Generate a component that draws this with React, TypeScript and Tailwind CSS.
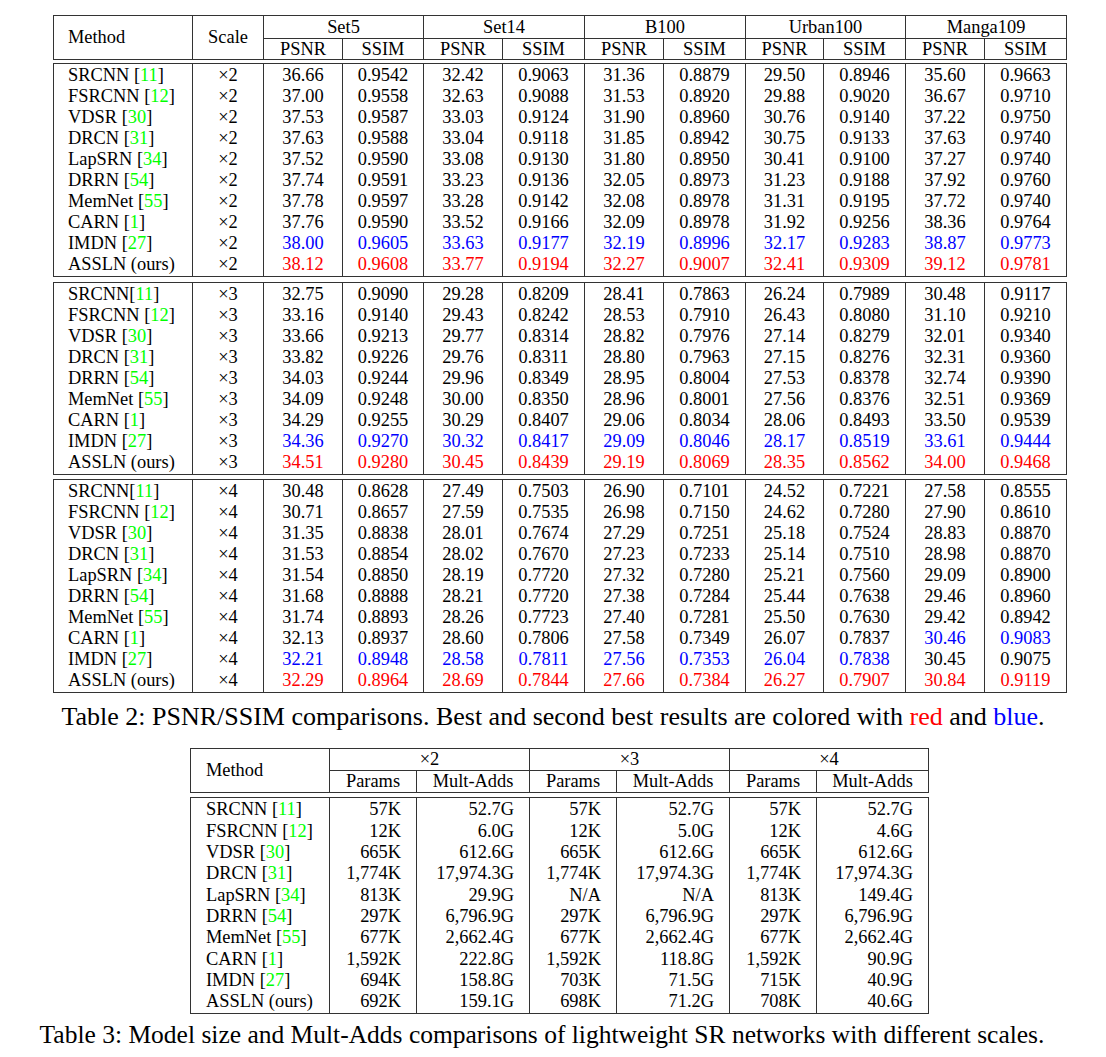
import React from "react";

type Row = {
  method: string;
  cite?: string;
  tight?: boolean;
  values: string[];
  colors?: string;
};

const TONE: Record<string, string> = {
  k: "text-black",
  b: "text-[#0000ff]",
  r: "text-[#ff0000]",
};

const x2: Row[] = [
  { method: "SRCNN", cite: "11", values: ["36.66", "0.9542", "32.42", "0.9063", "31.36", "0.8879", "29.50", "0.8946", "35.60", "0.9663"] },
  { method: "FSRCNN", cite: "12", values: ["37.00", "0.9558", "32.63", "0.9088", "31.53", "0.8920", "29.88", "0.9020", "36.67", "0.9710"] },
  { method: "VDSR", cite: "30", values: ["37.53", "0.9587", "33.03", "0.9124", "31.90", "0.8960", "30.76", "0.9140", "37.22", "0.9750"] },
  { method: "DRCN", cite: "31", values: ["37.63", "0.9588", "33.04", "0.9118", "31.85", "0.8942", "30.75", "0.9133", "37.63", "0.9740"] },
  { method: "LapSRN", cite: "34", values: ["37.52", "0.9590", "33.08", "0.9130", "31.80", "0.8950", "30.41", "0.9100", "37.27", "0.9740"] },
  { method: "DRRN", cite: "54", values: ["37.74", "0.9591", "33.23", "0.9136", "32.05", "0.8973", "31.23", "0.9188", "37.92", "0.9760"] },
  { method: "MemNet", cite: "55", values: ["37.78", "0.9597", "33.28", "0.9142", "32.08", "0.8978", "31.31", "0.9195", "37.72", "0.9740"] },
  { method: "CARN", cite: "1", values: ["37.76", "0.9590", "33.52", "0.9166", "32.09", "0.8978", "31.92", "0.9256", "38.36", "0.9764"] },
  { method: "IMDN", cite: "27", colors: "bbbbbbbbbb", values: ["38.00", "0.9605", "33.63", "0.9177", "32.19", "0.8996", "32.17", "0.9283", "38.87", "0.9773"] },
  { method: "ASSLN (ours)", colors: "rrrrrrrrrr", values: ["38.12", "0.9608", "33.77", "0.9194", "32.27", "0.9007", "32.41", "0.9309", "39.12", "0.9781"] },
];

const x3: Row[] = [
  { method: "SRCNN", cite: "11", tight: true, values: ["32.75", "0.9090", "29.28", "0.8209", "28.41", "0.7863", "26.24", "0.7989", "30.48", "0.9117"] },
  { method: "FSRCNN", cite: "12", values: ["33.16", "0.9140", "29.43", "0.8242", "28.53", "0.7910", "26.43", "0.8080", "31.10", "0.9210"] },
  { method: "VDSR", cite: "30", values: ["33.66", "0.9213", "29.77", "0.8314", "28.82", "0.7976", "27.14", "0.8279", "32.01", "0.9340"] },
  { method: "DRCN", cite: "31", values: ["33.82", "0.9226", "29.76", "0.8311", "28.80", "0.7963", "27.15", "0.8276", "32.31", "0.9360"] },
  { method: "DRRN", cite: "54", values: ["34.03", "0.9244", "29.96", "0.8349", "28.95", "0.8004", "27.53", "0.8378", "32.74", "0.9390"] },
  { method: "MemNet", cite: "55", values: ["34.09", "0.9248", "30.00", "0.8350", "28.96", "0.8001", "27.56", "0.8376", "32.51", "0.9369"] },
  { method: "CARN", cite: "1", values: ["34.29", "0.9255", "30.29", "0.8407", "29.06", "0.8034", "28.06", "0.8493", "33.50", "0.9539"] },
  { method: "IMDN", cite: "27", colors: "bbbbbbbbbb", values: ["34.36", "0.9270", "30.32", "0.8417", "29.09", "0.8046", "28.17", "0.8519", "33.61", "0.9444"] },
  { method: "ASSLN (ours)", colors: "rrrrrrrrrr", values: ["34.51", "0.9280", "30.45", "0.8439", "29.19", "0.8069", "28.35", "0.8562", "34.00", "0.9468"] },
];

const x4: Row[] = [
  { method: "SRCNN", cite: "11", tight: true, values: ["30.48", "0.8628", "27.49", "0.7503", "26.90", "0.7101", "24.52", "0.7221", "27.58", "0.8555"] },
  { method: "FSRCNN", cite: "12", values: ["30.71", "0.8657", "27.59", "0.7535", "26.98", "0.7150", "24.62", "0.7280", "27.90", "0.8610"] },
  { method: "VDSR", cite: "30", values: ["31.35", "0.8838", "28.01", "0.7674", "27.29", "0.7251", "25.18", "0.7524", "28.83", "0.8870"] },
  { method: "DRCN", cite: "31", values: ["31.53", "0.8854", "28.02", "0.7670", "27.23", "0.7233", "25.14", "0.7510", "28.98", "0.8870"] },
  { method: "LapSRN", cite: "34", values: ["31.54", "0.8850", "28.19", "0.7720", "27.32", "0.7280", "25.21", "0.7560", "29.09", "0.8900"] },
  { method: "DRRN", cite: "54", values: ["31.68", "0.8888", "28.21", "0.7720", "27.38", "0.7284", "25.44", "0.7638", "29.46", "0.8960"] },
  { method: "MemNet", cite: "55", values: ["31.74", "0.8893", "28.26", "0.7723", "27.40", "0.7281", "25.50", "0.7630", "29.42", "0.8942"] },
  { method: "CARN", cite: "1", colors: "kkkkkkkkbb", values: ["32.13", "0.8937", "28.60", "0.7806", "27.58", "0.7349", "26.07", "0.7837", "30.46", "0.9083"] },
  { method: "IMDN", cite: "27", colors: "bbbbbbbbkk", values: ["32.21", "0.8948", "28.58", "0.7811", "27.56", "0.7353", "26.04", "0.7838", "30.45", "0.9075"] },
  { method: "ASSLN (ours)", colors: "rrrrrrrrrr", values: ["32.29", "0.8964", "28.69", "0.7844", "27.66", "0.7384", "26.27", "0.7907", "30.84", "0.9119"] },
];

const sizes: Row[] = [
  { method: "SRCNN", cite: "11", values: ["57K", "52.7G", "57K", "52.7G", "57K", "52.7G"] },
  { method: "FSRCNN", cite: "12", values: ["12K", "6.0G", "12K", "5.0G", "12K", "4.6G"] },
  { method: "VDSR", cite: "30", values: ["665K", "612.6G", "665K", "612.6G", "665K", "612.6G"] },
  { method: "DRCN", cite: "31", values: ["1,774K", "17,974.3G", "1,774K", "17,974.3G", "1,774K", "17,974.3G"] },
  { method: "LapSRN", cite: "34", values: ["813K", "29.9G", "N/A", "N/A", "813K", "149.4G"] },
  { method: "DRRN", cite: "54", values: ["297K", "6,796.9G", "297K", "6,796.9G", "297K", "6,796.9G"] },
  { method: "MemNet", cite: "55", values: ["677K", "2,662.4G", "677K", "2,662.4G", "677K", "2,662.4G"] },
  { method: "CARN", cite: "1", values: ["1,592K", "222.8G", "1,592K", "118.8G", "1,592K", "90.9G"] },
  { method: "IMDN", cite: "27", values: ["694K", "158.8G", "703K", "71.5G", "715K", "40.9G"] },
  { method: "ASSLN (ours)", values: ["692K", "159.1G", "698K", "71.2G", "708K", "40.6G"] },
];

const datasets = ["Set5", "Set14", "B100", "Urban100", "Manga109"];

const Method = ({ row }: { row: Row }) => (
  <span className="whitespace-pre">
    {row.method}
    {row.cite && (
      <>
        {row.tight ? "[" : " ["}
        <span className="text-[#00ff00]">{row.cite}</span>]
      </>
    )}
  </span>
);

const ScoreBlock = ({ scale, rows }: { scale: string; rows: Row[] }) => (
  <div className="grid w-[1014px] grid-cols-[138px_71px_79px_81px_79px_82px_79px_82px_78px_82px_79px_82px] border border-[#333]">
    <div className="flex flex-col py-[1px]">
      {rows.map((r) => (
        <div key={r.method} className="flex h-[21px] items-center pl-[14px]">
          <Method row={r} />
        </div>
      ))}
    </div>
    <div className="flex flex-col border-l border-[#333] py-[1px]">
      {rows.map((r) => (
        <div key={r.method} className="flex h-[21px] items-center justify-center">
          ×{scale}
        </div>
      ))}
    </div>
    {Array.from({ length: 10 }).map((_, c) => (
      <div key={c} className="flex flex-col border-l border-[#333] py-[1px]">
        {rows.map((r) => (
          <div
            key={r.method}
            className={`flex h-[21px] items-center justify-center ${TONE[r.colors?.[c] ?? "k"]}`}
          >
            {r.values[c]}
          </div>
        ))}
      </div>
    ))}
  </div>
);

const ScoreTable = () => (
  <div className="ml-[53px] flex flex-col text-[18.4px] leading-none">
    <div className="grid w-[1014px] grid-cols-[138px_71px_79px_81px_79px_82px_79px_82px_78px_82px_79px_82px] grid-rows-[23px_20px] border border-[#333]">
      <div className="row-span-2 flex items-center pl-[14px]">Method</div>
      <div className="row-span-2 flex items-center justify-center border-l border-[#333]">
        Scale
      </div>
      {datasets.map((d) => (
        <div
          key={d}
          className="col-span-2 flex items-center justify-center border-b border-l border-[#333]"
        >
          {d}
        </div>
      ))}
      {datasets.map((d) => (
        <React.Fragment key={d}>
          <div className="flex items-center justify-center border-l border-[#333]">PSNR</div>
          <div className="flex items-center justify-center border-l border-[#333]">SSIM</div>
        </React.Fragment>
      ))}
    </div>
    <div className="mt-[3px]">
      <ScoreBlock scale="2" rows={x2} />
    </div>
    <div className="mt-[5px]">
      <ScoreBlock scale="3" rows={x3} />
    </div>
    <div className="mt-[4px]">
      <ScoreBlock scale="4" rows={x4} />
    </div>
  </div>
);

const SizeTable = () => (
  <div className="ml-[190px] flex flex-col text-[18.4px] leading-none">
    <div className="grid w-[739px] grid-cols-[138px_87px_113px_87px_113px_87px_112px] grid-rows-[22px_21px] border border-[#333]">
      <div className="row-span-2 flex items-center pl-[15px]">Method</div>
      {["2", "3", "4"].map((s) => (
        <div
          key={s}
          className="col-span-2 flex items-center justify-center border-b border-l border-[#333]"
        >
          ×{s}
        </div>
      ))}
      {["2", "3", "4"].map((s) => (
        <React.Fragment key={s}>
          <div className="flex items-center justify-center border-l border-[#333]">Params</div>
          <div className="flex items-center justify-center border-l border-[#333]">Mult-Adds</div>
        </React.Fragment>
      ))}
    </div>
    <div className="mt-[4px] grid w-[739px] grid-cols-[138px_87px_113px_87px_113px_87px_112px] border border-[#333]">
      <div className="flex flex-col py-[1px]">
        {sizes.map((r) => (
          <div key={r.method} className="flex h-[21.3px] items-center pl-[15px]">
            <Method row={r} />
          </div>
        ))}
      </div>
      {Array.from({ length: 6 }).map((_, c) => (
        <div key={c} className="flex flex-col border-l border-[#333] py-[1px]">
          {sizes.map((r) => (
            <div key={r.method} className="flex h-[21.3px] items-center justify-end pr-[15px]">
              {r.values[c]}
            </div>
          ))}
        </div>
      ))}
    </div>
  </div>
);

export default function App() {
  return (
    <div className="min-h-[1057px] bg-white pt-[15px] font-['Liberation_Serif','Times_New_Roman',serif] text-black">
      <ScoreTable />
      <p className="mt-[9px] text-center text-[26px] leading-[29px]">
        Table 2: PSNR/SSIM comparisons. Best and second best results are colored with{" "}
        <span className="text-[#ff0000]">red</span> and{" "}
        <span className="text-[#0000ff]">blue</span>.
      </p>
      <div className="mt-[17px]">
        <SizeTable />
      </div>
      <p className="mt-[6px] pr-[22px] text-center text-[25.5px] leading-[29px]">
        Table 3: Model size and Mult-Adds comparisons of lightweight SR networks with different scales.
      </p>
    </div>
  );
}
